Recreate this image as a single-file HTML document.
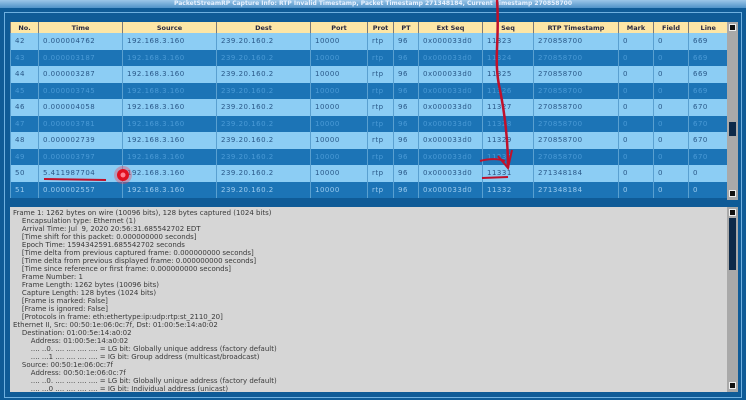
<!DOCTYPE html>
<html><head><meta charset="utf-8"><style>
*{margin:0;padding:0;box-sizing:border-box}
body{width:746px;height:400px;overflow:hidden;background:#0f5b97;font-family:"DejaVu Sans","Liberation Sans",sans-serif;position:relative}
.title{position:absolute;left:0;top:0;width:746px;height:8px;background:linear-gradient(#9cc6e8,#4f92c8);color:#e8f2ff;font-size:6px;line-height:8px;text-align:center;font-weight:bold}
.frame{position:absolute;left:4px;top:12px;width:738px;height:386px;border:1px solid #6fb0e0}
table{position:absolute;left:10px;top:22px;border-collapse:collapse;font-size:7px;table-layout:fixed;width:717px;letter-spacing:0.5px}
th{background:#fde6a6;color:#2a2a40;height:11px;font-weight:bold;border-left:1px solid #7a7a7a;font-size:6.5px;letter-spacing:0}
td{height:16.5px;padding-left:4px;border-left:1px solid #5aa0d0;white-space:nowrap;overflow:hidden}
tr.l td{background:#8ccdf4;color:#2a5888}
tr.d td{background:#1c74b6;color:#4a9ad6}
.sb{position:absolute;left:727px;top:22px;width:11px;height:178px;background:#a9a9a9}
.detail{position:absolute;left:10px;top:207px;width:717px;height:185px;background:#d6d6d6;color:#3a3a3a;font-size:7px;line-height:8px;padding:2px 0 0 3px;white-space:pre}
.sb2{position:absolute;left:727px;top:207px;width:11px;height:185px;background:#a9a9a9}
.btn{position:absolute;width:7px;height:7px;background:#111;border:1px solid #eee}
</style></head><body>
<div class="title">PacketStreamRP Capture Info: RTP Invalid Timestamp, Packet Timestamp 271348184, Current Timestamp 270858700</div>
<div class="frame"></div>
<table>
<colgroup><col style="width:28px"><col style="width:84px"><col style="width:94px"><col style="width:94px"><col style="width:57px"><col style="width:26px"><col style="width:25px"><col style="width:64px"><col style="width:51px"><col style="width:85px"><col style="width:35px"><col style="width:35px"><col style="width:39px"></colgroup>
<tr><th>No.</th><th>Time</th><th>Source</th><th>Dest</th><th>Port</th><th>Prot</th><th>PT</th><th>Ext Seq</th><th>Seq</th><th>RTP Timestamp</th><th>Mark</th><th>Field</th><th>Line</th></tr>
<tr class="l"><td>42</td><td>0.000004762</td><td>192.168.3.160</td><td>239.20.160.2</td><td>10000</td><td>rtp</td><td>96</td><td>0x000033d0</td><td>11323</td><td>270858700</td><td>0</td><td>0</td><td>669</td></tr>
<tr class="d"><td>43</td><td>0.000003187</td><td>192.168.3.160</td><td>239.20.160.2</td><td>10000</td><td>rtp</td><td>96</td><td>0x000033d0</td><td>11324</td><td>270858700</td><td>0</td><td>0</td><td>669</td></tr>
<tr class="l"><td>44</td><td>0.000003287</td><td>192.168.3.160</td><td>239.20.160.2</td><td>10000</td><td>rtp</td><td>96</td><td>0x000033d0</td><td>11325</td><td>270858700</td><td>0</td><td>0</td><td>669</td></tr>
<tr class="d"><td>45</td><td>0.000003745</td><td>192.168.3.160</td><td>239.20.160.2</td><td>10000</td><td>rtp</td><td>96</td><td>0x000033d0</td><td>11326</td><td>270858700</td><td>0</td><td>0</td><td>669</td></tr>
<tr class="l"><td>46</td><td>0.000004058</td><td>192.168.3.160</td><td>239.20.160.2</td><td>10000</td><td>rtp</td><td>96</td><td>0x000033d0</td><td>11327</td><td>270858700</td><td>0</td><td>0</td><td>670</td></tr>
<tr class="d"><td>47</td><td>0.000003781</td><td>192.168.3.160</td><td>239.20.160.2</td><td>10000</td><td>rtp</td><td>96</td><td>0x000033d0</td><td>11328</td><td>270858700</td><td>0</td><td>0</td><td>670</td></tr>
<tr class="l"><td>48</td><td>0.000002739</td><td>192.168.3.160</td><td>239.20.160.2</td><td>10000</td><td>rtp</td><td>96</td><td>0x000033d0</td><td>11329</td><td>270858700</td><td>0</td><td>0</td><td>670</td></tr>
<tr class="d"><td>49</td><td>0.000003797</td><td>192.168.3.160</td><td>239.20.160.2</td><td>10000</td><td>rtp</td><td>96</td><td>0x000033d0</td><td>11330</td><td>270858700</td><td>0</td><td>0</td><td>670</td></tr>
<tr class="l"><td>50</td><td>5.411987704</td><td>192.168.3.160</td><td>239.20.160.2</td><td>10000</td><td>rtp</td><td>96</td><td>0x000033d0</td><td>11331</td><td>271348184</td><td>0</td><td>0</td><td>0</td></tr>
<tr class="d"><td style="color:#9ccbee">51</td><td style="color:#9ccbee">0.000002557</td><td style="color:#9ccbee">192.168.3.160</td><td style="color:#9ccbee">239.20.160.2</td><td style="color:#9ccbee">10000</td><td style="color:#9ccbee">rtp</td><td style="color:#9ccbee">96</td><td style="color:#9ccbee">0x000033d0</td><td style="color:#9ccbee">11332</td><td style="color:#9ccbee">271348184</td><td style="color:#9ccbee">0</td><td style="color:#9ccbee">0</td><td style="color:#9ccbee">0</td></tr>
</table>
<div class="sb"><div class="btn" style="left:2px;top:2px"></div><div style="position:absolute;left:2px;top:100px;width:7px;height:14px;background:#0c2a4a"></div><div class="btn" style="left:2px;top:168px"></div></div>
<div class="detail">Frame 1: 1262 bytes on wire (10096 bits), 128 bytes captured (1024 bits)
    Encapsulation type: Ethernet (1)
    Arrival Time: Jul  9, 2020 20:56:31.685542702 EDT
    [Time shift for this packet: 0.000000000 seconds]
    Epoch Time: 1594342591.685542702 seconds
    [Time delta from previous captured frame: 0.000000000 seconds]
    [Time delta from previous displayed frame: 0.000000000 seconds]
    [Time since reference or first frame: 0.000000000 seconds]
    Frame Number: 1
    Frame Length: 1262 bytes (10096 bits)
    Capture Length: 128 bytes (1024 bits)
    [Frame is marked: False]
    [Frame is ignored: False]
    [Protocols in frame: eth:ethertype:ip:udp:rtp:st_2110_20]
Ethernet II, Src: 00:50:1e:06:0c:7f, Dst: 01:00:5e:14:a0:02
    Destination: 01:00:5e:14:a0:02
        Address: 01:00:5e:14:a0:02
        .... ..0. .... .... .... .... = LG bit: Globally unique address (factory default)
        .... ...1 .... .... .... .... = IG bit: Group address (multicast/broadcast)
    Source: 00:50:1e:06:0c:7f
        Address: 00:50:1e:06:0c:7f
        .... ..0. .... .... .... .... = LG bit: Globally unique address (factory default)
        .... ...0 .... .... .... .... = IG bit: Individual address (unicast)</div>
<div class="sb2"><div class="btn" style="left:2px;top:2px"></div><div style="position:absolute;left:2px;top:11px;width:7px;height:52px;background:#0c2a4a"></div><div class="btn" style="left:2px;top:175px"></div></div>
<svg style="position:absolute;left:0;top:0" width="746" height="400">
<path d="M497 0 C500 40 493 60 500 90 C505 115 508 140 508 168" stroke="#c0102a" stroke-width="2.5" fill="none"/>
<path d="M498 156 L508 168 L512 150" stroke="#c0102a" stroke-width="2" fill="none"/>
<path d="M480 161 C490 158 500 159 505 161" stroke="#c0102a" stroke-width="2" fill="none"/>
<path d="M482 178 L508 177" stroke="#c0102a" stroke-width="2" fill="none"/>
<path d="M44 179 L106 180" stroke="#c0102a" stroke-width="2" fill="none"/>
<circle cx="123" cy="175" r="9" fill="#ff4050" opacity="0.35"/>
<circle cx="123" cy="175" r="6" fill="#e01020"/>
<circle cx="123" cy="175" r="2.5" fill="#ff8090"/>
</svg>
</body></html>
